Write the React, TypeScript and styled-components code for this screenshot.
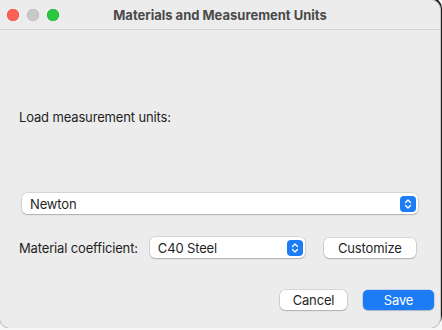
import React from "react";
import styled, { createGlobalStyle } from "styled-components";

const GlobalStyle = createGlobalStyle`
  html, body {
    margin: 0;
    padding: 0;
    background: #f6f6f6;
  }
  body {
    font-family: "Inter", "Liberation Sans", sans-serif;
    -webkit-font-smoothing: antialiased;
  }
`;

const Window = styled.div`
  width: 440px;
  height: 328px;
  background: #ececec;
  border-radius: 0 10px 10px 10px;
  box-shadow: 0 0 0 1px #c4c4c4, 2px -2px 0 0 #1e1e1e;
  display: flex;
  flex-direction: column;
  overflow: hidden;
  color: #1f1f1f;
  font-size: 13px;
  letter-spacing: -0.15px;
`;

const TitleBar = styled.div`
  height: 29px;
  border-bottom: 1px solid #d3d3d3;
  display: flex;
  align-items: center;
  padding-left: 7px;
  position: relative;
`;

const Lights = styled.div`
  display: flex;
  gap: 8px;
`;

const Light = styled.span<{ $color: string; $border: string }>`
  width: 12px;
  height: 12px;
  border-radius: 50%;
  background: ${(p) => p.$color};
  box-shadow: inset 0 0 0 0.5px ${(p) => p.$border};
`;

const Title = styled.div`
  position: absolute;
  left: 0;
  right: 0;
  text-align: center;
  font-weight: 700;
  font-size: 13px;
  letter-spacing: 0;
  color: #4a4a4a;
  pointer-events: none;
`;

const Body = styled.div`
  flex: 1;
  display: flex;
  flex-direction: column;
  padding: 0 6px 0 19px;
`;

const Label = styled.div<{ $top?: number }>`
  margin-top: ${(p) => p.$top ?? 0}px;
  line-height: 16px;
`;

const SelectBox = styled.div<{ $width: number }>`
  width: ${(p) => p.$width}px;
  height: 21px;
  box-sizing: border-box;
  background: #fff;
  border-radius: 5px;
  box-shadow: 0 0 0 0.5px rgba(0, 0, 0, 0.18), 0 1px 1.5px rgba(0, 0, 0, 0.18);
  display: flex;
  align-items: center;
  justify-content: space-between;
  padding: 0 2px 0 8px;
  color: #1f1f1f;
`;

const Stepper = styled.span`
  width: 16px;
  height: 16px;
  border-radius: 4px;
  background: #1b7cf6;
  display: flex;
  align-items: center;
  justify-content: center;
`;

const Row = styled.div<{ $top: number }>`
  display: flex;
  align-items: center;
  margin-top: ${(p) => p.$top}px;
`;

const Button = styled.button<{ $primary?: boolean; $width: number }>`
  width: ${(p) => p.$width}px;
  height: 20px;
  border: none;
  border-radius: 5px;
  font-family: inherit;
  font-size: 13px;
  letter-spacing: -0.15px;
  padding: 0;
  color: ${(p) => (p.$primary ? "#fff" : "#1f1f1f")};
  background: ${(p) => (p.$primary ? "#1b7cf6" : "#fff")};
  box-shadow: ${(p) =>
    p.$primary
      ? "0 0 0 0.5px rgba(0,80,200,0.3), 0 1px 1px rgba(0,0,0,0.15)"
      : "0 0 0 0.5px rgba(0,0,0,0.18), 0 1px 1.5px rgba(0,0,0,0.18)"};
`;

const Footer = styled.div`
  display: flex;
  justify-content: flex-end;
  gap: 16px;
  margin-top: 32px;
`;

const Chevrons = () => (
  <svg width="10" height="12" viewBox="0 0 10 12" fill="none">
    <path
      d="M2.5 4.5 L5 2 L7.5 4.5 M2.5 7.5 L5 10 L7.5 7.5"
      stroke="#fff"
      strokeWidth="1.4"
      strokeLinecap="round"
      strokeLinejoin="round"
    />
  </svg>
);

export default function App() {
  return (
    <>
      <GlobalStyle />
      <Window>
        <TitleBar>
          <Lights>
            <Light $color="#fe5f57" $border="#e2463f" />
            <Light $color="#c8c8c8" $border="#b5b5b5" />
            <Light $color="#28c840" $border="#1aab29" />
          </Lights>
          <Title>Materials and Measurement Units</Title>
        </TitleBar>
        <Body>
          <Label $top={79}>Load measurement units:</Label>
          <Row $top={68}>
            <SelectBox $width={396} style={{ marginLeft: 3 }}>
              <span>Newton</span>
              <Stepper>
                <Chevrons />
              </Stepper>
            </SelectBox>
          </Row>
          <Row $top={23}>
            <Label>Material coefficient:</Label>
            <SelectBox $width={155} style={{ marginLeft: 12 }}>
              <span>C40 Steel</span>
              <Stepper>
                <Chevrons />
              </Stepper>
            </SelectBox>
            <Button $width={92} style={{ marginLeft: 19 }}>
              Customize
            </Button>
          </Row>
          <Footer>
            <Button $width={67}>Cancel</Button>
            <Button $primary $width={71}>
              Save
            </Button>
          </Footer>
        </Body>
      </Window>
    </>
  );
}
